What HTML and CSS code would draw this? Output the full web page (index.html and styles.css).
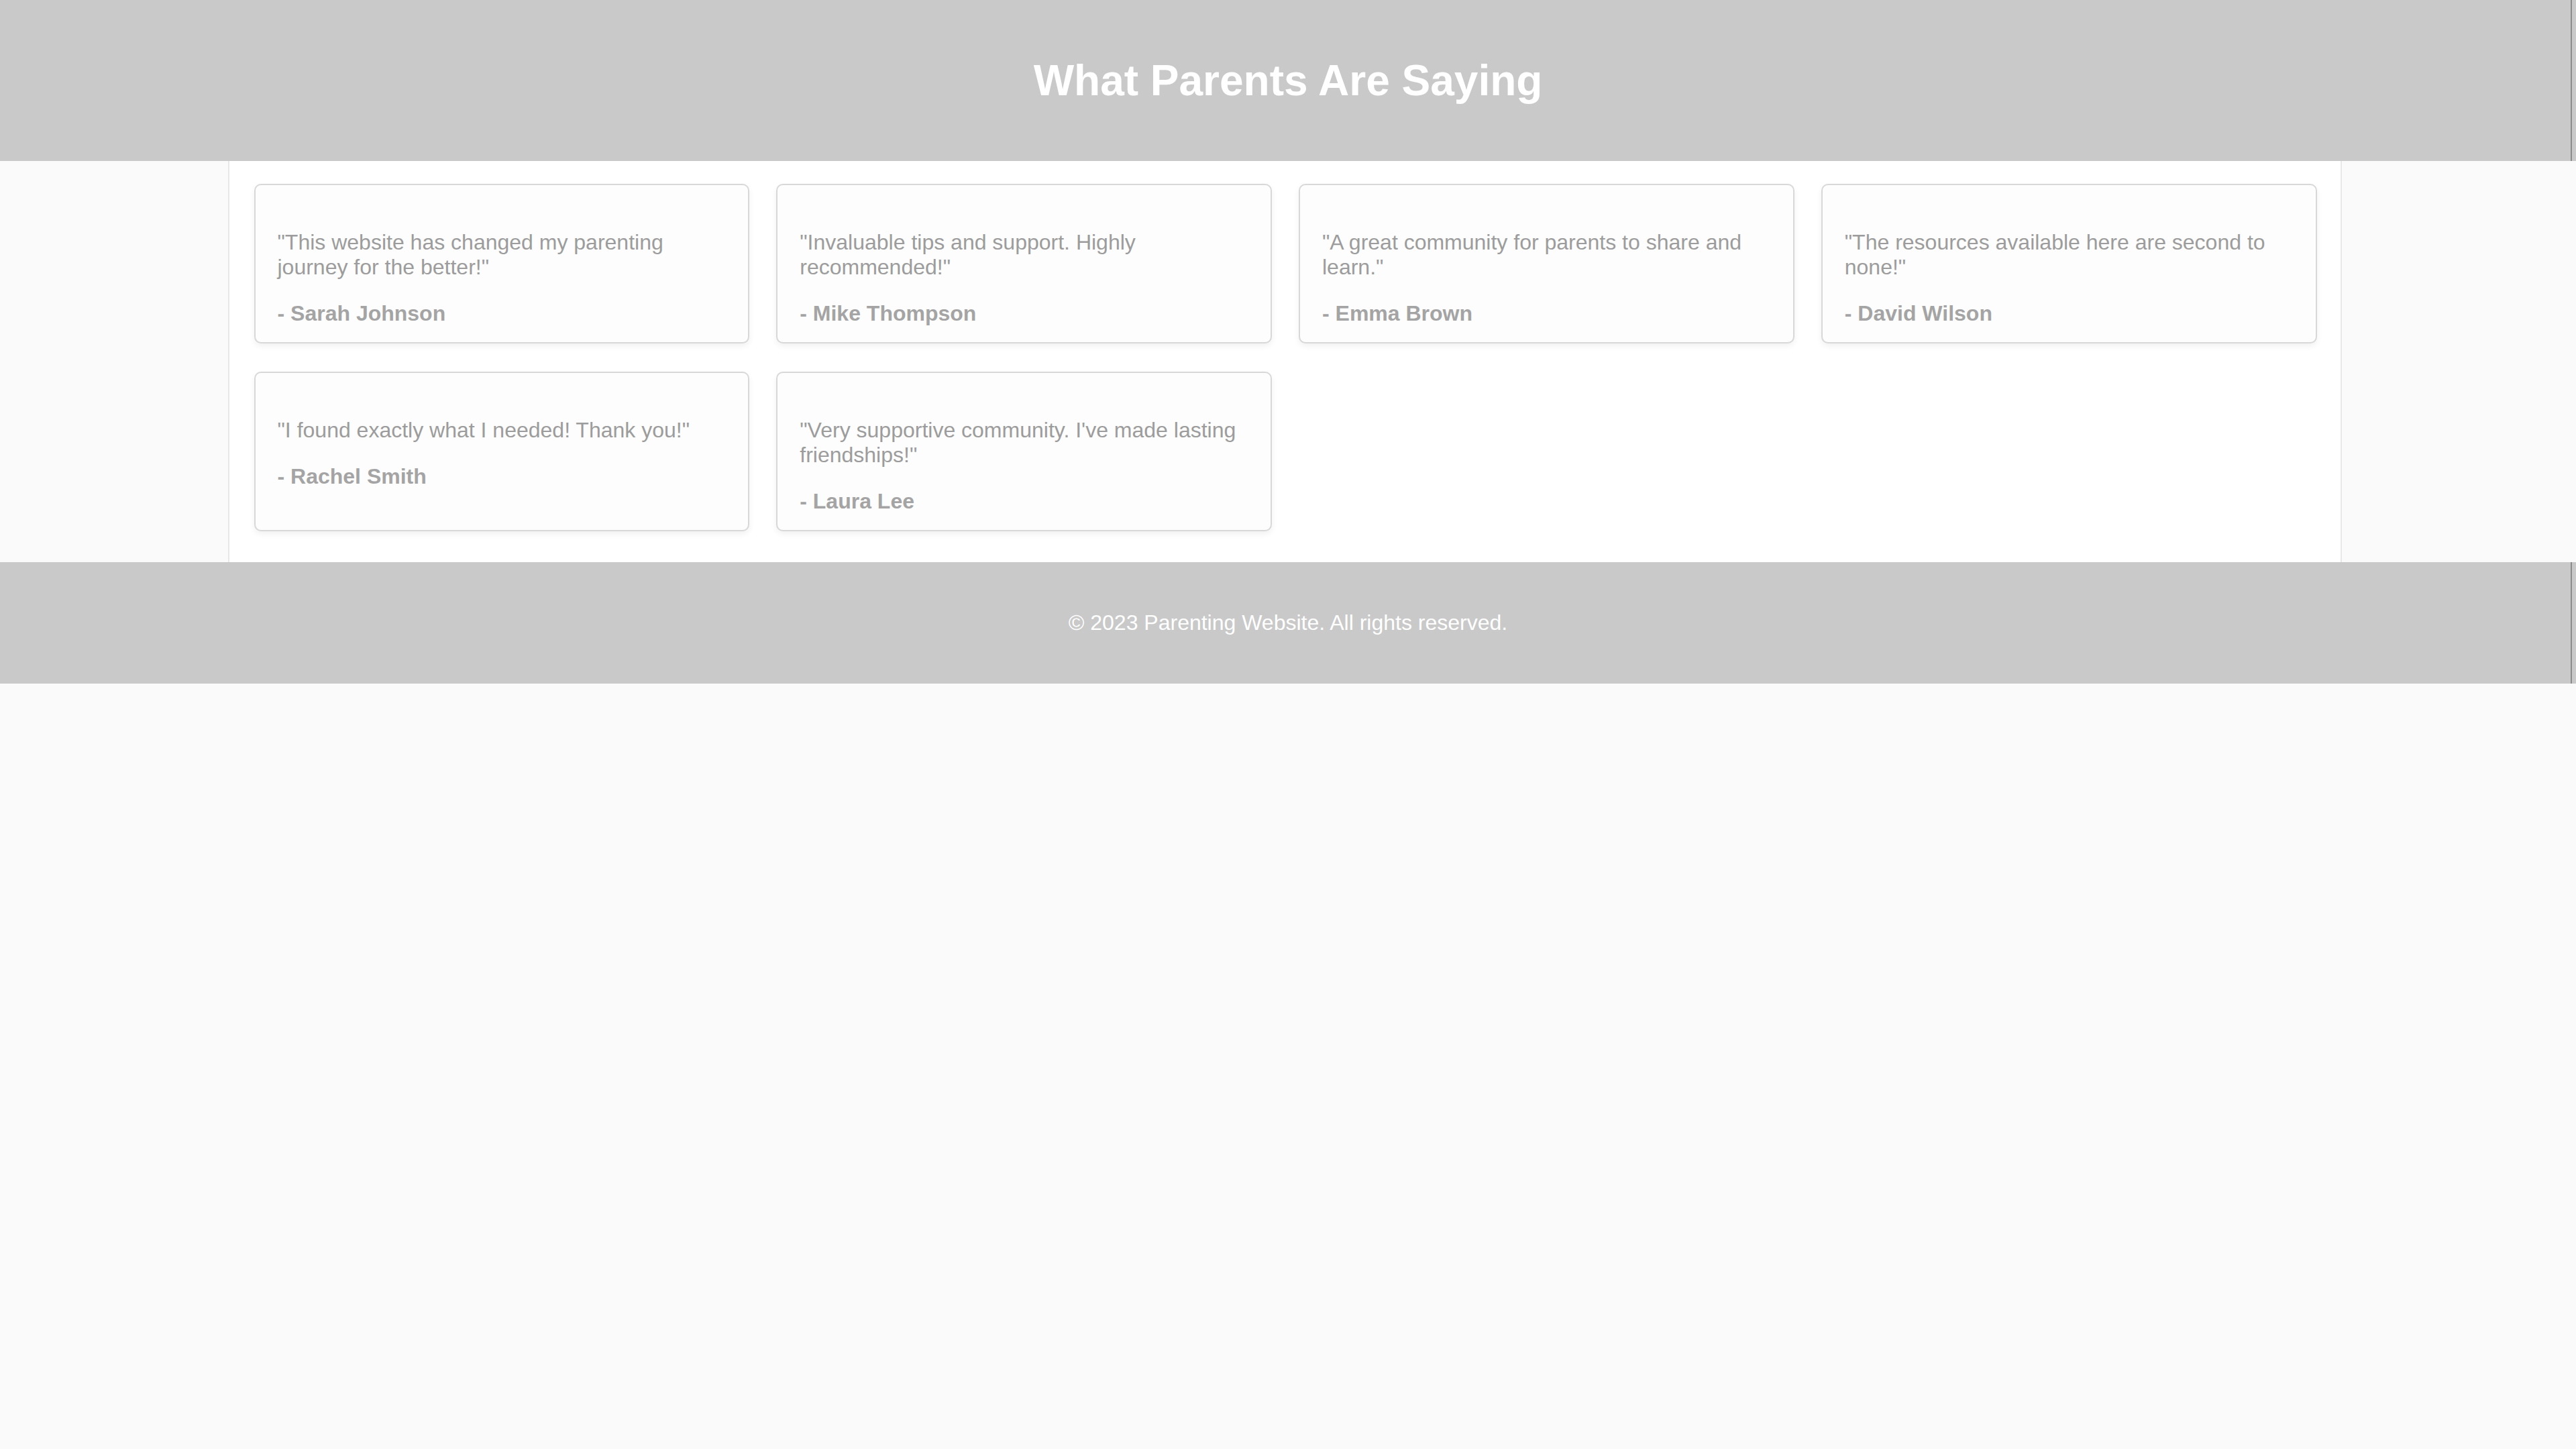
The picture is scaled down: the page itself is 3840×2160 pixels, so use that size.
FILE: index.html
```html
<!DOCTYPE html>
<html lang="en">
<head>
<meta charset="utf-8">
<title>What Parents Are Saying</title>
<link rel="stylesheet" href="styles.css">
</head>
<body>
<header class="site-header">
  <h1 class="site-title">What Parents Are Saying</h1>
</header>
<main class="main">
  <section class="container">
    <div class="grid">
      <div class="card">
        <p class="quote">"This website has changed my parenting journey for the better!"</p>
        <p class="author">- Sarah Johnson</p>
      </div>
      <div class="card">
        <p class="quote">"Invaluable tips and support. Highly recommended!"</p>
        <p class="author">- Mike Thompson</p>
      </div>
      <div class="card">
        <p class="quote">"A great community for parents to share and learn."</p>
        <p class="author">- Emma Brown</p>
      </div>
      <div class="card">
        <p class="quote">"The resources available here are second to none!"</p>
        <p class="author">- David Wilson</p>
      </div>
      <div class="card">
        <p class="quote">"I found exactly what I needed! Thank you!"</p>
        <p class="author">- Rachel Smith</p>
      </div>
      <div class="card">
        <p class="quote">"Very supportive community. I've made lasting friendships!"</p>
        <p class="author">- Laura Lee</p>
      </div>
    </div>
  </section>
</main>
<footer class="site-footer">
  <p class="copyright">© 2023 Parenting Website. All rights reserved.</p>
</footer>
</body>
</html>
```
FILE: styles.css
```css
html, body {
  margin: 0;
  padding: 0;
}

body {
  background: #fafafa;
  font-family: "Liberation Sans", Arial, sans-serif;
  font-size: 32px;
  color: #999999;
}

.site-header {
  background: #c9c9c9;
  padding: 40px 0;
  text-align: center;
  color: #ffffff;
  box-shadow: inset -6px 0 0 #c9c9c9, inset -8px 0 0 #8c8c8c;
}

.site-title {
  margin: 42.88px 0;
  font-size: 64px;
  font-weight: bold;
  line-height: normal;
}

.main {
  padding-right: 10px;
}

.container {
  width: 3075px;
  margin: 0 auto;
  padding: 34px 35px 46px 37px;
  background: #ffffff;
  border-left: 2px solid #e8e8e8;
  border-right: 2px solid #e8e8e8;
}

.grid {
  display: grid;
  grid-template-columns: repeat(4, 1fr);
  column-gap: 40px;
  row-gap: 42px;
}

.card {
  background: #fdfdfd;
  border: 2px solid #d8d8d8;
  border-radius: 10px;
  box-shadow: 0 4px 10px rgba(0, 0, 0, 0.06);
  padding: 35px 30px 24px 33px;
}

.quote {
  margin: 32px 0 0;
  color: #9c9c9c;
  line-height: normal;
}

.author {
  margin: 32px 0 0;
  font-weight: bold;
  color: #a4a4a4;
  line-height: normal;
}

.site-footer {
  background: #c9c9c9;
  padding: 40px 0;
  text-align: center;
  color: #ffffff;
  box-shadow: inset -6px 0 0 #c9c9c9, inset -8px 0 0 #8c8c8c;
}

.copyright {
  margin: 32px 0;
  line-height: normal;
}
```
